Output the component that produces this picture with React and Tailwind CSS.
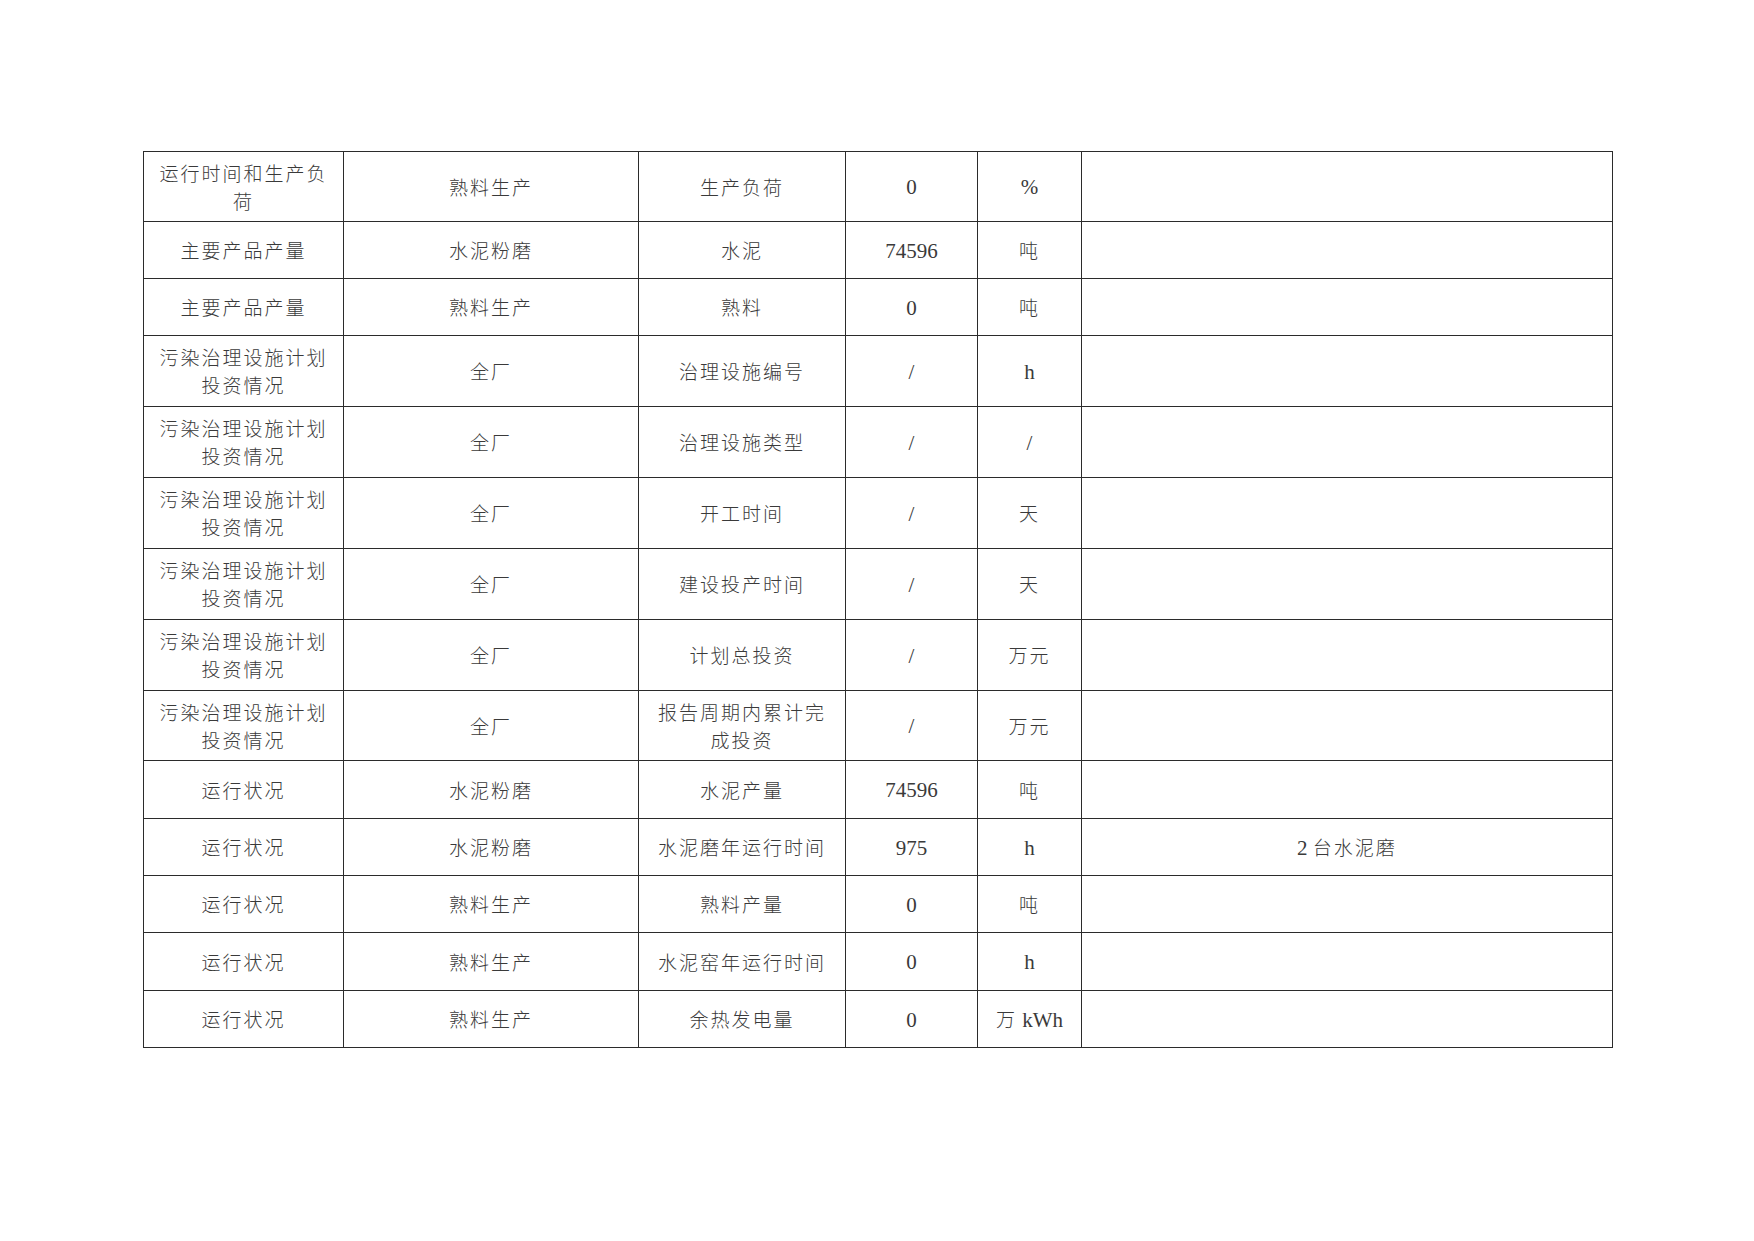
import React from "react";

const rows = [
  { h: "h-[70px]", cells: ["运行时间和生产负\n荷", "熟料生产", "生产负荷", "0", "%", ""] },
  { h: "h-[57px]", cells: ["主要产品产量", "水泥粉磨", "水泥", "74596", "吨", ""] },
  { h: "h-[57px]", cells: ["主要产品产量", "熟料生产", "熟料", "0", "吨", ""] },
  { h: "h-[71px]", cells: ["污染治理设施计划\n投资情况", "全厂", "治理设施编号", "/", "h", ""] },
  { h: "h-[71px]", cells: ["污染治理设施计划\n投资情况", "全厂", "治理设施类型", "/", "/", ""] },
  { h: "h-[71px]", cells: ["污染治理设施计划\n投资情况", "全厂", "开工时间", "/", "天", ""] },
  { h: "h-[71px]", cells: ["污染治理设施计划\n投资情况", "全厂", "建设投产时间", "/", "天", ""] },
  { h: "h-[71px]", cells: ["污染治理设施计划\n投资情况", "全厂", "计划总投资", "/", "万元", ""] },
  { h: "h-[70px]", cells: ["污染治理设施计划\n投资情况", "全厂", "报告周期内累计完\n成投资", "/", "万元", ""] },
  { h: "h-[58px]", cells: ["运行状况", "水泥粉磨", "水泥产量", "74596", "吨", ""] },
  { h: "h-[57px]", cells: ["运行状况", "水泥粉磨", "水泥磨年运行时间", "975", "h", "2 台水泥磨"] },
  { h: "h-[57px]", cells: ["运行状况", "熟料生产", "熟料产量", "0", "吨", ""] },
  { h: "h-[58px]", cells: ["运行状况", "熟料生产", "水泥窑年运行时间", "0", "h", ""] },
  { h: "h-[57px]", cells: ["运行状况", "熟料生产", "余热发电量", "0", "万 kWh", ""] },
];

// split a line into CJK runs and latin runs, each gets its own font
function Runs({ text }) {
  const parts = text.split(/([\u3000-\u9fff\uff00-\uffef]+)/).filter((p) => p !== "");
  return parts.map((p, i) =>
    /[\u3000-\u9fff\uff00-\uffef]/.test(p) ? (
      <span key={i} className="tracking-[2px]">
        {p}
      </span>
    ) : (
      <span key={i} className="text-[21px] font-['Liberation_Serif',serif] whitespace-pre">
        {p}
      </span>
    )
  );
}

function Cell({ text }) {
  return (
    <div className="border-r border-b border-[#2b2b2b] flex flex-col items-center justify-center text-center text-[#3a3a3a] font-light text-[19px] leading-[28px] font-['Noto_Sans_CJK_SC',sans-serif] px-2">
      {text.split("\n").map((line, i) => (
        <div key={i}>
          <Runs text={line} />
        </div>
      ))}
    </div>
  );
}

export default function App() {
  return (
    <div className="w-[1754px] h-[1241px] bg-white pt-[151px] pl-[143px]">
      <div className="w-[1470px] border-l border-t border-[#2b2b2b]">
        {rows.map((row, i) => (
          <div
            key={i}
            className={`grid grid-cols-[200px_295px_207px_132px_104px_531px] ${row.h}`}
          >
            {row.cells.map((c, j) => (
              <Cell key={j} text={c} />
            ))}
          </div>
        ))}
      </div>
    </div>
  );
}
